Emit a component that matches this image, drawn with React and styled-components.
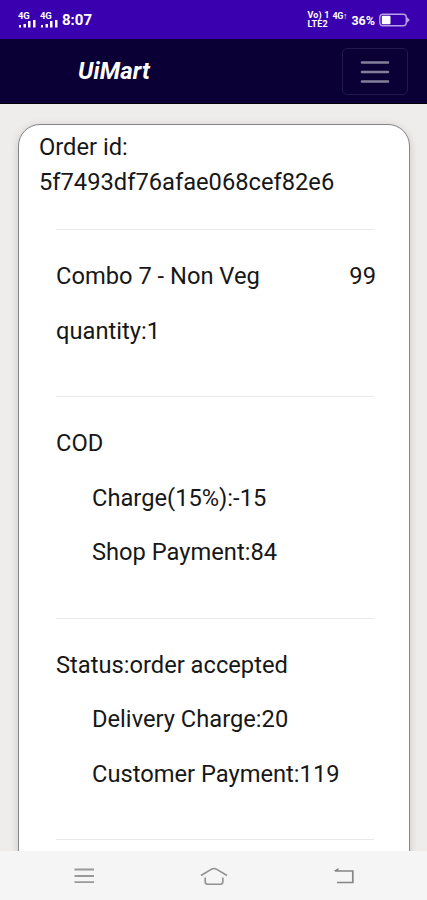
import React from 'react';
import styled, { createGlobalStyle } from 'styled-components';

const GlobalStyle = createGlobalStyle`
  * {
    box-sizing: border-box;
  }

  body {
    margin: 0;
    background-color: #eeedeb;
    font-family: Roboto, sans-serif;
    color: #171717;
  }
`;

const Screen = styled.div`
  display: flex;
  flex-direction: column;
  width: 427px;
  height: 900px;
  overflow: hidden;
`;

const StatusBar = styled.div`
  display: flex;
  flex-shrink: 0;
  align-items: center;
  height: 39px;
  padding: 1px 17px 0 18px;
  background-color: #3a00b0;
  color: #fff;
`;

const Signal = styled.div`
  width: 18px;
  margin-right: 4px;
  font-size: 9.5px;
  line-height: 8px;
  font-weight: 700;
  letter-spacing: -0.2px;

  svg {
    display: block;
  }
`;

const Clock = styled.div`
  margin-right: auto;
  font-size: 15px;
  line-height: 18px;
  font-weight: 700;
`;

const Volte = styled.div`
  width: 25px;
  font-size: 9px;
  line-height: 9px;
  font-weight: 700;
  letter-spacing: 0.2px;
  white-space: nowrap;

  div {
    height: 9px;
    overflow: hidden;
  }
`;

const Network = styled.div`
  width: 16px;
  height: 17px;
  font-size: 9px;
  line-height: 9px;
  font-weight: 700;
  letter-spacing: -0.3px;
`;

const Percent = styled.div`
  margin: 1px 4px 0 3px;
  font-size: 12.5px;
  line-height: 16px;
  font-weight: 700;
`;

const NavBar = styled.div`
  display: flex;
  flex-shrink: 0;
  align-items: center;
  justify-content: space-between;
  height: 65px;
  padding: 1px 19px 0 78px;
  border-bottom: 1px solid #000;
  background-color: #0b0035;
`;

const Brand = styled.div`
  padding-bottom: 2px;
  font-size: 24px;
  line-height: 30px;
  font-weight: 700;
  font-style: italic;
  color: #fff;
  letter-spacing: 0.1px;
`;

const Toggler = styled.button`
  display: flex;
  align-items: center;
  justify-content: center;
  width: 66px;
  height: 47px;
  padding: 0;
  border: 1px solid #221a4b;
  border-radius: 5px;
  background-color: transparent;
`;

const Content = styled.div`
  flex: 1;
  min-height: 0;
  padding: 20px 17px 0 18px;
  overflow: hidden;
`;

const Card = styled.div`
  height: 800px;
  padding: 5px 35px 0 20px;
  border: 1px solid #85858b;
  border-radius: 22px;
  background-color: #fff;
  box-shadow: 0 2px 8px rgba(0, 0, 0, 0.16);
`;

const OrderId = styled.div`
  margin-bottom: 29px;
  font-size: 23.7px;
  line-height: 35px;
`;

const Section = styled.div`
  height: ${({ $height }) => $height}px;
  padding-top: 29px;
  margin-left: 17px;
  border-top: 1px solid #e9e9e9;
`;

const Row = styled.div`
  display: flex;
  justify-content: space-between;
  padding-left: ${({ $indent }) => ($indent ? 36 : 0)}px;
  margin-right: -2px;
  margin-bottom: 19px;
  font-size: 23.7px;
  line-height: 35.5px;
  white-space: nowrap;
`;

const BottomBar = styled.div`
  display: flex;
  flex-shrink: 0;
  align-items: center;
  justify-content: space-between;
  height: 49px;
  padding: 1px 72px 0 73px;
  background-color: #f5f5f5;
`;

const SignalIcon = () => (
  <Signal>
    4G
    <svg width="18" height="8" viewBox="0 0 18 8" fill="#fff">
      <rect x="1" y="5" width="2" height="2.5" />
      <rect x="5.5" y="4" width="2.5" height="3.5" />
      <rect x="10" y="1" width="2.5" height="6.5" />
      <rect x="15" y="-2" width="2.5" height="9.5" overflow="visible" />
    </svg>
  </Signal>
);

const BatteryIcon = () => (
  <svg width="31" height="14" viewBox="0 0 31 14" fill="none">
    <rect x="0.8" y="1.2" width="26.5" height="11.6" rx="3" stroke="#b7a2e4" strokeWidth="1.4" />
    <rect x="2.8" y="2.8" width="8.7" height="8.4" rx="1" fill="#fff" />
    <path d="M27.8 4L30.8 7L27.8 10Z" fill="#b7a2e4" />
  </svg>
);

const sections = [
  {
    height: 167,
    rows: [
      { label: 'Combo 7 - Non Veg', value: '99' },
      { label: 'quantity:1' },
    ],
  },
  {
    height: 221.5,
    rows: [
      { label: 'COD' },
      { label: 'Charge(15%):-15', indent: true },
      { label: 'Shop Payment:84', indent: true },
    ],
  },
  {
    height: 221.5,
    rows: [
      { label: 'Status:order accepted' },
      { label: 'Delivery Charge:20', indent: true },
      { label: 'Customer Payment:119', indent: true },
    ],
  },
  { height: 60, rows: [] },
];

const App = () => (
  <Screen>
    <GlobalStyle />
    <StatusBar>
      <SignalIcon />
      <SignalIcon />
      <Clock>8:07</Clock>
      <Volte>
        <div>Vo) 1</div>
        <div>LTE2</div>
      </Volte>
      <Network>4G↑</Network>
      <Percent>36%</Percent>
      <BatteryIcon />
    </StatusBar>
    <NavBar>
      <Brand>UiMart</Brand>
      <Toggler aria-label="Menu">
        <svg width="30" height="24" viewBox="0 0 30 24" stroke="#858099" strokeWidth="2.6" strokeLinecap="round">
          <path d="M2 2.5H28M2 12H28M2 21.5H28" />
        </svg>
      </Toggler>
    </NavBar>
    <Content>
      <Card>
        <OrderId>
          <div>Order id:</div>
          <div>5f7493df76afae068cef82e6</div>
        </OrderId>
        {sections.map(({ height, rows }) => (
          <Section key={rows.length ? rows[0].label : 'end'} $height={height}>
            {rows.map(({ label, value, indent }) => (
              <Row key={label} $indent={indent}>
                <span>{label}</span>
                {value && <span>{value}</span>}
              </Row>
            ))}
          </Section>
        ))}
      </Card>
    </Content>
    <BottomBar>
      <svg width="22" height="18" viewBox="0 0 22 18" stroke="#999" strokeWidth="1.8">
        <path d="M1.5 2.5H21M1.5 9H21M1.5 15.2H21" />
      </svg>
      <svg width="28" height="20" viewBox="0 0 28 20" fill="none" stroke="#909090" strokeWidth="1.6">
        <path d="M1 9.5L12 2.9Q14 2 16 2.9L27 9.5" />
        <path d="M5.2 11.5V16Q5.2 18.2 7.5 18.2H20.5Q22.8 18.2 22.8 16V11.5" />
      </svg>
      <svg width="22" height="18" viewBox="0 0 22 18" fill="none" stroke="#858585" strokeWidth="1.7">
        <path d="M2 4H19.8V15.5H4" />
        <path d="M0.5 4L5.5 1V4Z" fill="#858585" stroke="none" />
      </svg>
    </BottomBar>
  </Screen>
);

export default App;
